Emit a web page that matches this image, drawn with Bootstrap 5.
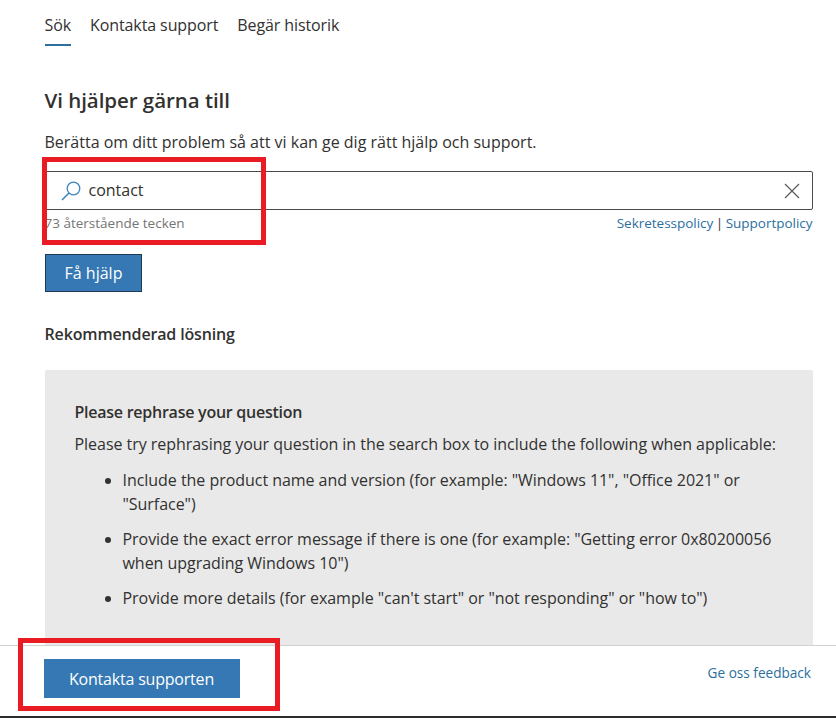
<!DOCTYPE html>
<html lang="sv">
<head>
  <meta charset="UTF-8" />
  <title>Hjälp och support</title>
  <meta name="viewport" content="width=device-width, initial-scale=1" />
  <link href="https://cdn.jsdelivr.net/npm/bootstrap@5.3.0/dist/css/bootstrap.min.css" rel="stylesheet" />
  <style>
    html, body { height: 100%; overflow: hidden; }
    body {
      font-family: "Open Sans", "Noto Sans", sans-serif;
      font-size: 16px;
      color: #323130;
      background: #fff;
    }
    .page-wrap { height: 718px; position: relative; border-bottom: 2px solid #2b2b2b; }
    .main-area { padding: 0 23.5px 0 44.5px; overflow: hidden; min-height: 0; }
    .tab-row { height: 46px; gap: 19px; padding-top: 13px; }
    .tab-item { color: #323130; font-size: 16px; line-height: 24px; letter-spacing: -.1px; height: 33px; text-decoration: none; }
    .tab-item.on { border-bottom: 2px solid #2f6f9f; }
    .page-title { font-size: 20.5px; font-weight: 600; line-height: 28px; margin: 40px 0 0; letter-spacing: -.05px; }
    .page-sub { font-size: 16px; line-height: 22px; margin: 17px 0 0; }
    .search-box { height: 39px; margin-top: 18px; border: 1px solid #4a4a4a; border-radius: 2px; padding: 0 12px 0 15px; }
    .search-text { font-size: 16px; margin: -2px 0 0 8px; }
    .search-meta { font-size: 13.5px; line-height: 18px; margin-top: 4px; }
    .char-left { color: #757575; }
    .policy-links { word-spacing: -1px; letter-spacing: -.02px; }
    .link-blue { color: #2b6f9e; text-decoration: none; }
    .help-btn { background: #3578b4; color: #fff; border: 1px solid #1f3a55; border-radius: 0; font-size: 16px; width: 97px; height: 38px; padding: 0 0 0 1px; margin-top: 22px; }
    .sec-title { font-size: 16px; font-weight: 600; line-height: 22px; margin: 31px 0 0; letter-spacing: -.15px; }
    .answer-box { background: #e9e9e9; border-radius: 2px; margin-top: 25px; padding: 31px 30px 40px; font-size: 16px; letter-spacing: -.04px; line-height: 24px; }
    .answer-head { font-weight: 600; margin: 0; line-height: 22px; letter-spacing: -.25px; }
    .answer-intro { margin: 10px 0 0; line-height: 22px; }
    .answer-list { margin: 13px 0 0; padding-left: 48px; }
    .answer-list li { margin-bottom: 11px; }
    .foot-bar { height: 71px; flex: none; border-top: 1px solid #d2d2d2; padding: 13px 25px 0 43.5px; background: #fff; }
    .support-btn { background: #3578b4; color: #fff; border: 0; border-radius: 0; font-size: 16px; width: 196px; height: 39px; padding: 0; letter-spacing: -.2px; }
    .feedback-link { font-size: 13.6px; margin-top: 4px; }
    .mark-red { position: absolute; border: 5px solid #e91c24; pointer-events: none; }
    .mark-search { left: 42px; top: 157px; width: 224px; height: 88px; }
    .mark-support { left: 18px; top: 638px; width: 262px; height: 73px; }
  </style>
</head>
<body>
  <div class="page-wrap d-flex flex-column">
    <div class="main-area flex-grow-1">
      <div class="tab-row d-flex">
        <a class="tab-item on" href="#">Sök</a>
        <a class="tab-item" href="#">Kontakta support</a>
        <a class="tab-item" href="#">Begär historik</a>
      </div>

      <h1 class="page-title">Vi hjälper gärna till</h1>
      <p class="page-sub">Berätta om ditt problem så att vi kan ge dig rätt hjälp och support.</p>

      <div class="search-box d-flex align-items-center">
        <svg width="20" height="20" viewBox="0 0 20 20" fill="none" stroke="#3f86bd" stroke-width="1.3">
          <circle cx="12.5" cy="7.5" r="6.3" />
          <path d="M8 12 1 19" stroke-width="1.6" />
        </svg>
        <span class="search-text flex-grow-1">contact</span>
        <svg width="16" height="16" viewBox="0 0 16 16" stroke="#5a5a5a" stroke-width="1.2">
          <path d="M1 1 15 15M15 1 1 15" />
        </svg>
      </div>
      <div class="search-meta d-flex justify-content-between">
        <span class="char-left">73 återstående tecken</span>
        <span class="policy-links"><a class="link-blue" href="#">Sekretesspolicy</a> | <a class="link-blue" href="#">Supportpolicy</a></span>
      </div>

      <button class="btn help-btn" type="button">Få hjälp</button>

      <h2 class="sec-title">Rekommenderad lösning</h2>

      <div class="answer-box">
        <p class="answer-head">Please rephrase your question</p>
        <p class="answer-intro">Please try rephrasing your question in the search box to include the following when applicable:</p>
        <ul class="answer-list">
          <li>Include the product name and version (for example: "Windows 11", "Office 2021" or "Surface")</li>
          <li>Provide the exact error message if there is one (for example: "Getting error 0x80200056 when upgrading Windows 10")</li>
          <li>Provide more details (for example "can't start" or "not responding" or "how to")</li>
        </ul>
      </div>
    </div>

    <div class="foot-bar d-flex justify-content-between align-items-start">
      <button class="btn support-btn" type="button">Kontakta supporten</button>
      <a class="link-blue feedback-link" href="#">Ge oss feedback</a>
    </div>

    <div class="mark-red mark-search"></div>
    <div class="mark-red mark-support"></div>
  </div>
  <script src="https://cdn.jsdelivr.net/npm/bootstrap@5.3.0/dist/js/bootstrap.bundle.min.js"></script>
</body>
</html>
